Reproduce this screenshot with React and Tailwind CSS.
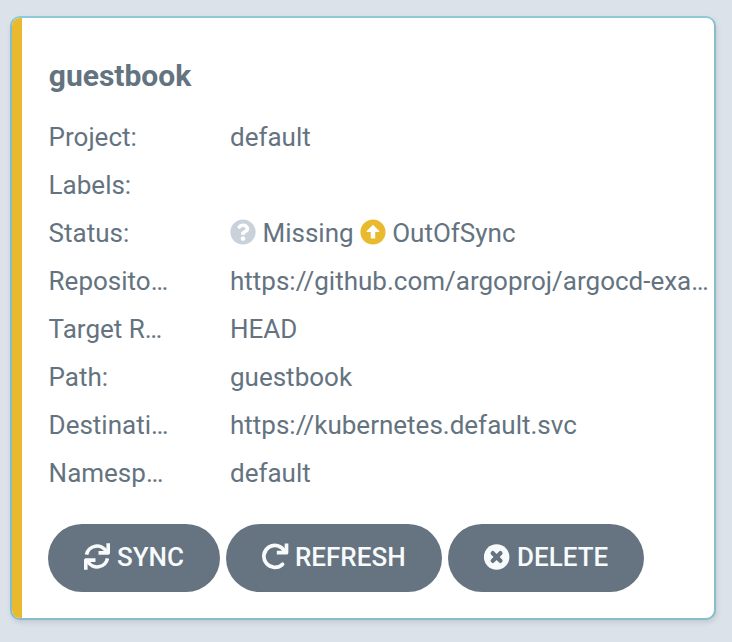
import React from 'react';
import { FaQuestionCircle, FaArrowAltCircleUp } from 'react-icons/fa';

function SyncIcon() {
  return (
    <svg width="26" height="27" viewBox="0 0 26 27" fill="none" stroke="currentColor" strokeWidth="3.6">
      <path d="M2.5 11.7A10.6 10.6 0 0 1 22.2 8.6" />
      <path d="M24.2 .3V9.9H14.5" strokeLinejoin="round" />
      <path d="M23.5 15.3A10.6 10.6 0 0 1 3.8 18.4" />
      <path d="M1.8 26.7V17.1H11.5" strokeLinejoin="round" />
    </svg>
  );
}

function RefreshIcon() {
  return (
    <svg width="27" height="27" viewBox="0 0 27 27" fill="none" stroke="currentColor" strokeWidth="3.7">
      <path d="M22.6 8.2A11 11 0 1 0 20.5 21.3" strokeLinecap="round" />
      <path d="M24.5 .4V9.7H14.8" strokeLinejoin="round" />
    </svg>
  );
}

function DeleteIcon() {
  return (
    <svg width="26" height="26" viewBox="0 0 26 26">
      <circle cx="12.6" cy="13" r="12.8" fill="currentColor" />
      <path d="M8.8 9.2l7.6 7.6M16.4 9.2l-7.6 7.6" stroke="#667380" strokeWidth="4.4" strokeLinecap="round" />
    </svg>
  );
}

function Row({ name, children }) {
  return (
    <div className="flex h-12 items-center whitespace-nowrap">
      <div className="w-[181.4px] shrink-0">{name}</div>
      <div className="flex items-center">{children}</div>
    </div>
  );
}

function Button({ icon, text, size }) {
  return (
    <button className={'flex h-[68px] items-center rounded-full bg-[#667380] pb-[2px] pl-[36.4px] text-[26px] font-medium leading-[48px] text-[#f8fbfb] ' + size}>
      <span className="flex w-[27px] shrink-0 items-center pb-px">{icon}</span>
      <span className="ml-[5.6px]">{text}</span>
    </button>
  );
}

export default function App() {
  return (
    <div className="h-[642px] w-[732px] overflow-hidden bg-[#dce2e9] pl-[10px] pt-4 font-[Roboto,sans-serif] text-[26px] leading-[48px] text-[#647380]">
      <div className="flex h-[604px] w-[706px] overflow-hidden rounded-[10px] border-2 border-[#85bdcb] border-t-[#8dcbd9] bg-white shadow-[1px_3px_5px_#c4cbd3]">
        <div className="w-[10px] shrink-0 bg-[#e9ba2d]" />
        <div className="flex min-w-0 flex-col pl-[26.6px] pt-[34px]">
          <h1 className="ml-[0.2px] text-[30px] font-bold leading-[48px]">guestbook</h1>
          <div className="mt-[13px]">
            <Row name="Project:">default</Row>
            <Row name="Labels:" />
            <Row name="Status:">
              <FaQuestionCircle className="mb-[2px] mr-[6.5px] text-[#c9d1db]" />
              <span>Missing</span>
              <FaArrowAltCircleUp className="mb-[2px] ml-[6.3px] mr-[6.3px] text-[#e9ba2d]" />
              <span>OutOfSync</span>
            </Row>
            <Row name="Reposito…">https://github.com/argoproj/argocd-exa…</Row>
            <Row name="Target R…">HEAD</Row>
            <Row name="Path:">guestbook</Row>
            <Row name="Destinati…">https://kubernetes.default.svc</Row>
            <Row name="Namesp…">default</Row>
          </div>
          <div className="-ml-[0.6px] mt-[27px] flex gap-[6px]">
            <Button size="w-[172px]" icon={<SyncIcon />} text="SYNC" />
            <Button size="w-[216px]" icon={<RefreshIcon />} text="REFRESH" />
            <Button size="w-[196px]" icon={<DeleteIcon />} text="DELETE" />
          </div>
        </div>
      </div>
    </div>
  );
}
